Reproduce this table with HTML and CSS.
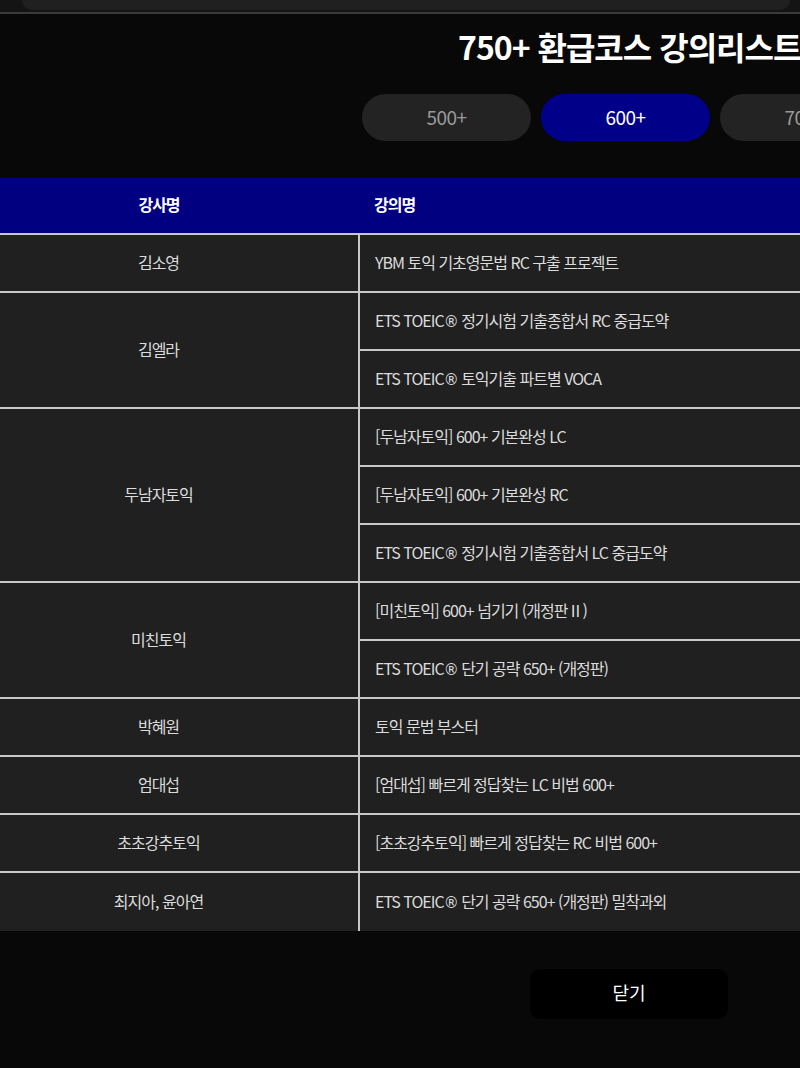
FILE: index.html
```html
<!DOCTYPE html>
<html lang="ko">
<head>
<meta charset="utf-8">
<link rel="stylesheet" href="styles.css">
</head>
<body>
<div class="topbar"><div class="topbar-inner"></div></div>
<div class="page">
  <h1 class="title">750+ 환급코스 강의리스트</h1>
  <div class="tabs">
    <div class="tab">500+</div>
    <div class="tab active">600+</div>
    <div class="tab">700+</div>
    <div class="tab">750+</div>
  </div>
  <table class="list">
    <thead>
      <tr><th class="c1">강사명</th><th class="c2">강의명</th></tr>
    </thead>
    <tbody>
      <tr><td class="c1">김소영</td><td class="c2">YBM 토익 기초영문법 RC 구출 프로젝트</td></tr>
      <tr><td class="c1" rowspan="2">김엘라</td><td class="c2">ETS TOEIC<span class="reg">®</span> 정기시험 기출종합서 RC 중급도약</td></tr>
      <tr><td class="c2">ETS TOEIC<span class="reg">®</span> 토익기출 파트별 VOCA</td></tr>
      <tr><td class="c1" rowspan="3">두남자토익</td><td class="c2">[두남자토익] 600+ 기본완성 LC</td></tr>
      <tr><td class="c2">[두남자토익] 600+ 기본완성 RC</td></tr>
      <tr><td class="c2">ETS TOEIC<span class="reg">®</span> 정기시험 기출종합서 LC 중급도약</td></tr>
      <tr><td class="c1" rowspan="2">미친토익</td><td class="c2">[미친토익] 600+ 넘기기 (개정판Ⅱ)</td></tr>
      <tr><td class="c2">ETS TOEIC<span class="reg">®</span> 단기 공략 650+ (개정판)</td></tr>
      <tr><td class="c1">박혜원</td><td class="c2">토익 문법 부스터</td></tr>
      <tr><td class="c1">엄대섭</td><td class="c2">[엄대섭] 빠르게 정답찾는 LC 비법 600+</td></tr>
      <tr><td class="c1">초초강추토익</td><td class="c2">[초초강추토익] 빠르게 정답찾는 RC 비법 600+</td></tr>
      <tr><td class="c1 last">최지아, 윤아연</td><td class="c2 last">ETS TOEIC<span class="reg">®</span> 단기 공략 650+ (개정판) 밀착과외</td></tr>
    </tbody>
  </table>
  <div class="actions">
    <button class="close">닫기</button>
  </div>
</div>
</body>
</html>
```

FILE: styles.css
```css
html, body {
  margin: 0;
  padding: 0;
  background: #080808;
  overflow: hidden;
  width: 800px;
  height: 1068px;
  font-family: "Noto Sans CJK KR", "Noto Sans", sans-serif;
  color: #e0e0e0;
}
.topbar {
  height: 12px;
  background: #141414;
  border-bottom: 2px solid #3a3a3a;
  padding: 0 10px 0 22px;
}
.topbar-inner {
  height: 10px;
  background: #202020;
  border-radius: 0 0 12px 12px;
}
.page {
  width: 800px;
}
.title {
  margin: 0;
  padding: 10px 0 0 458px;
  height: 64px;
  box-sizing: border-box;
  font-size: 32px;
  font-weight: 700;
  letter-spacing: -1px;
  color: #fff;
  white-space: nowrap;
  line-height: 44px;
}
.tabs {
  display: flex;
  gap: 10px;
  padding: 16px 0 0 362px;
  height: 100px;
  box-sizing: border-box;
  white-space: nowrap;
  overflow: hidden;
}
.tab {
  flex: 0 0 169px;
  height: 47px;
  box-sizing: border-box;
  padding-bottom: 3px;
  border-radius: 24px;
  background: #232323;
  color: #9a9a9a;
  font-size: 19px;
  display: flex;
  align-items: center;
  justify-content: center;
  letter-spacing: -0.5px;
}
.tab.active {
  background: #000088;
  color: #fff;
}
.list {
  border-collapse: collapse;
  margin-left: -41px;
  width: 1000px;
  table-layout: fixed;
  font-size: 16px;
  letter-spacing: -1px;
}
.list th {
  background: #000080;
  color: #fff;
  font-weight: 700;
  height: 52px;
  padding: 0 0 3px 0;
  font-size: 16px;
  border-bottom: 2px solid #c8c8c8;
}
.list th.c1 { width: 400px; text-align: center; }
.list th.c2 { text-align: left; padding-left: 15px; }
.list td {
  background: #202020;
  height: 53px;
  padding: 0 0 3px 0;
  border-bottom: 2px solid #c8c8c8;
  color: #dcdcdc;
  white-space: nowrap;
}
.list td.c1 {
  text-align: center;
  border-right: 2px solid #c8c8c8;
}
.list td.c2 {
  text-align: left;
  padding-left: 15px;
}
.list td.last {
  border-bottom: none;
  height: 55px;
}
.reg {
  font-family: "DejaVu Sans", sans-serif;
  font-size: 15px;
  letter-spacing: 0;
  margin-right: -1px;
}
.actions {
  display: flex;
  padding: 38px 0 0 530px;
}
.close {
  width: 198px;
  height: 50px;
  padding: 0 0 4px 0;
  border: none;
  border-radius: 10px;
  background: #000;
  color: #fff;
  font-family: inherit;
  font-size: 18px;
  cursor: pointer;
}
```
